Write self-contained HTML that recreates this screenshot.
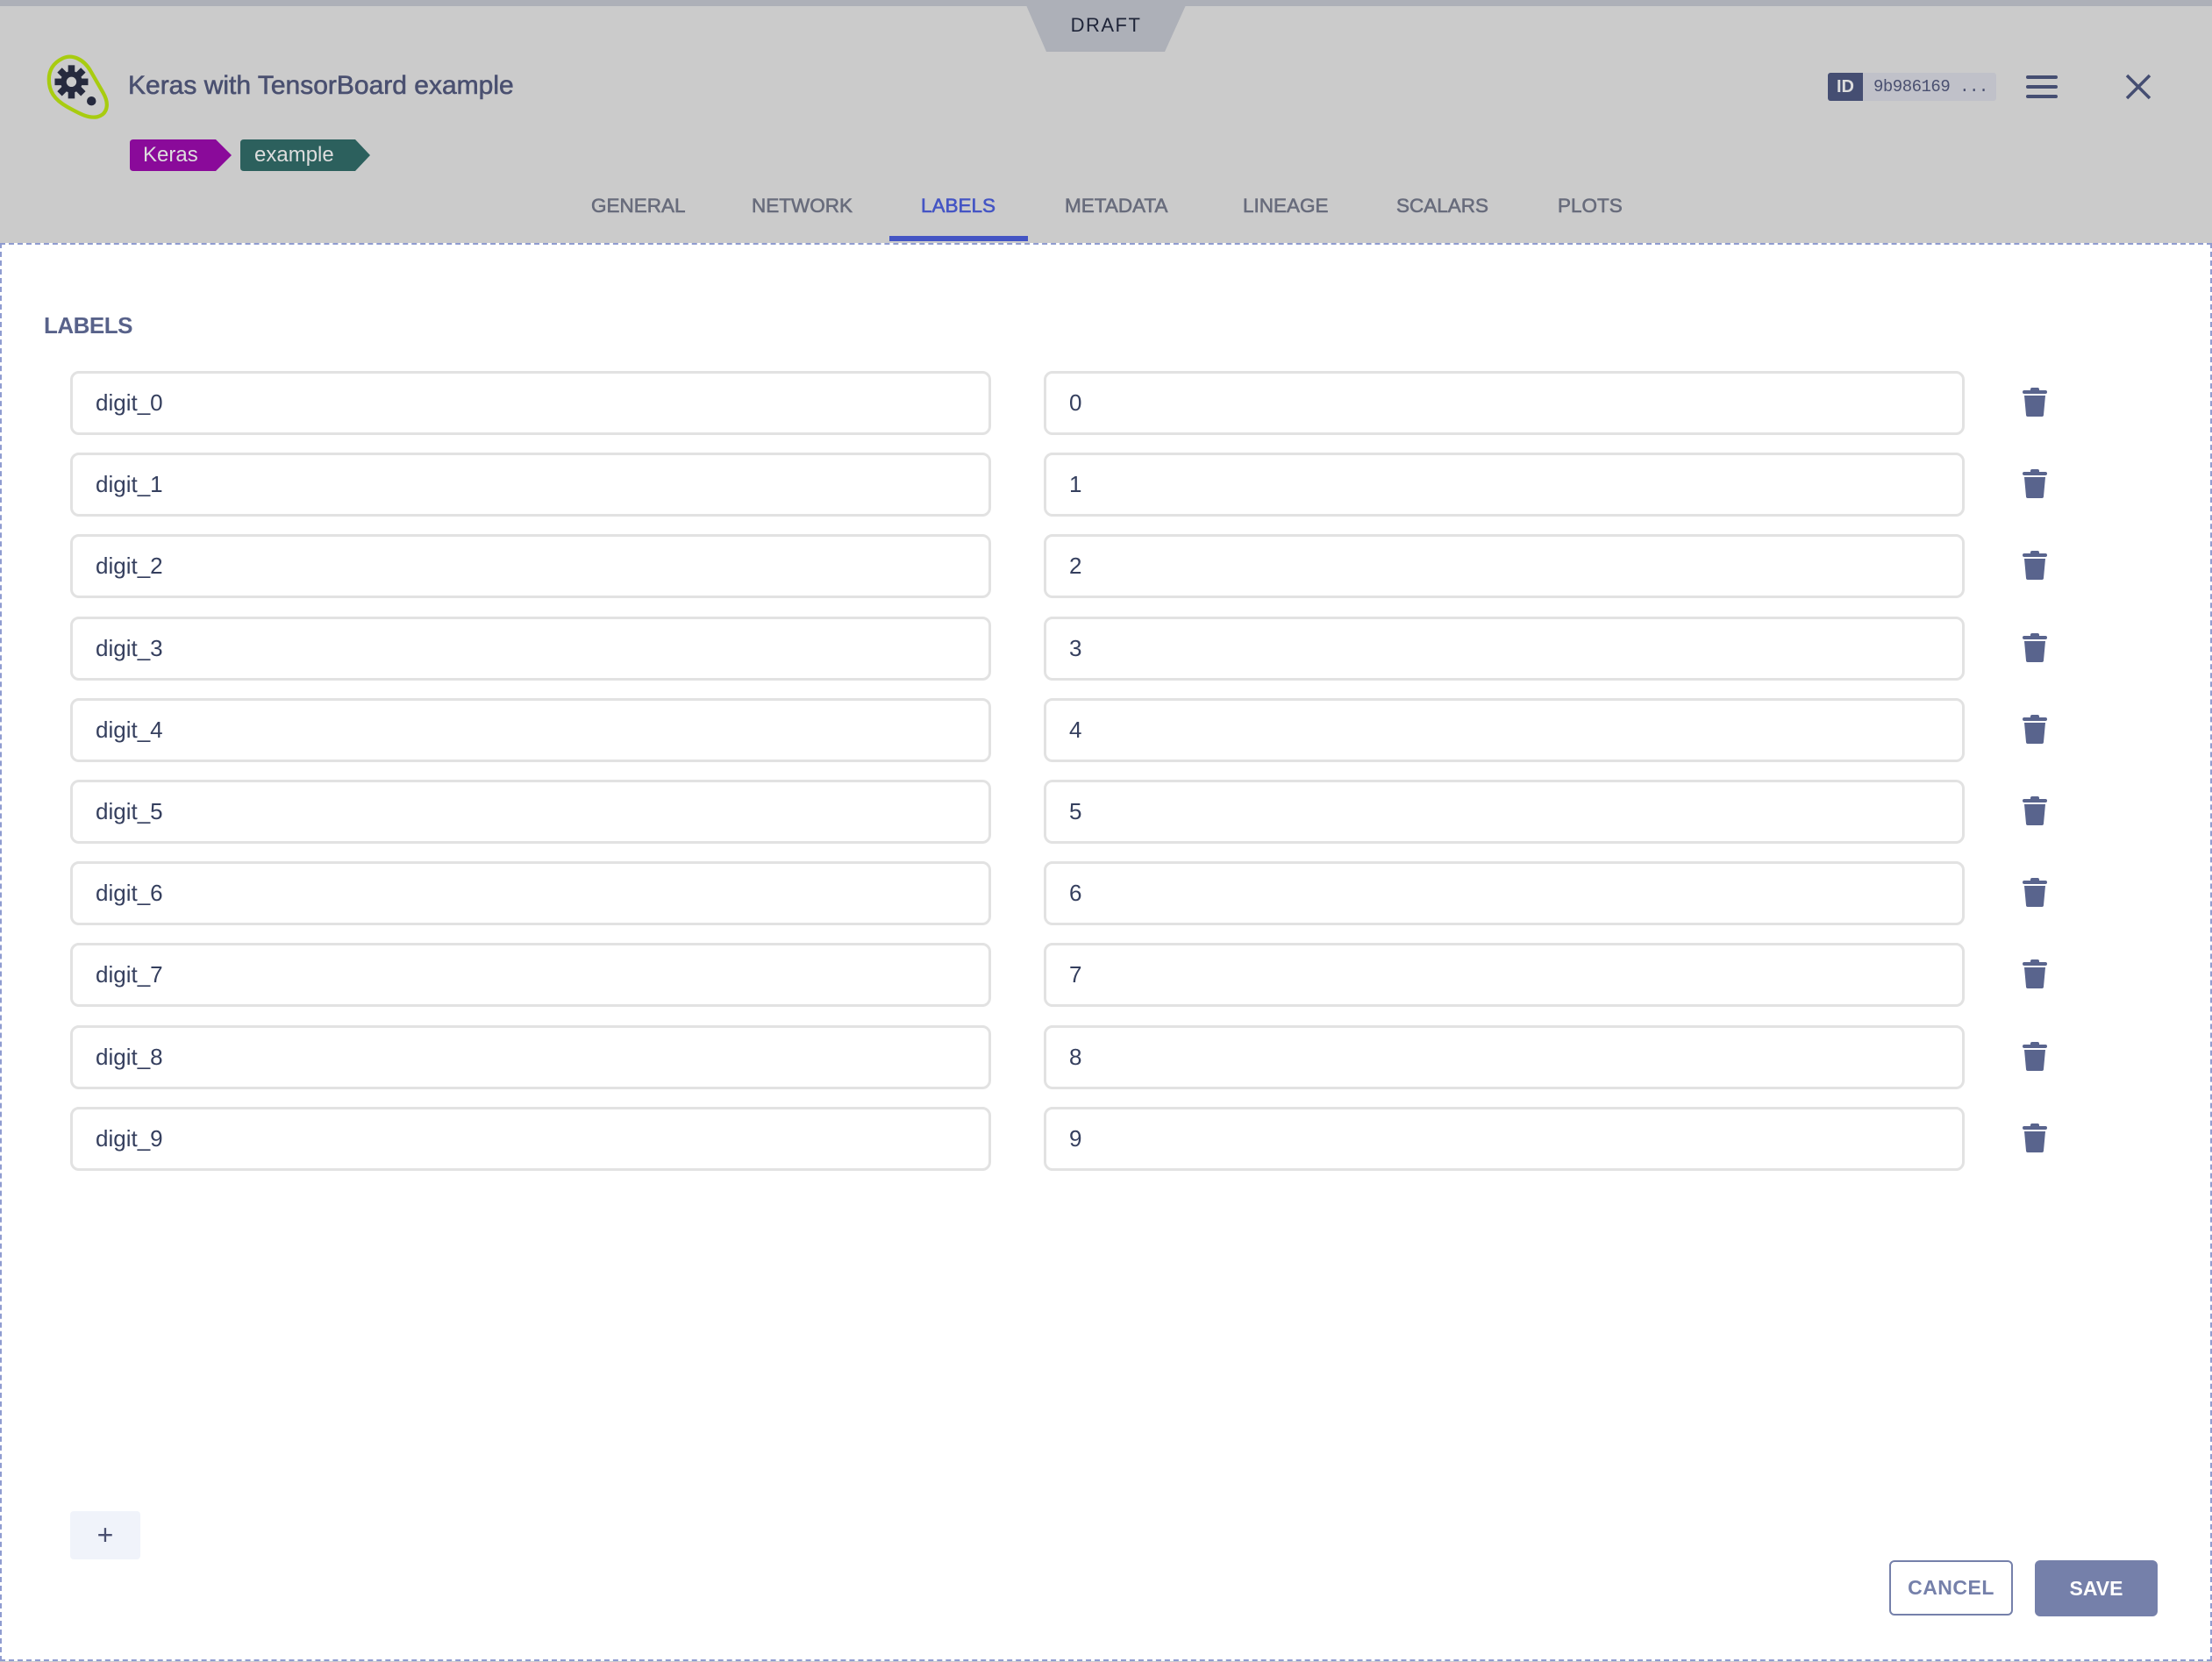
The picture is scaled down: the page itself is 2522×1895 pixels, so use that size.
<!DOCTYPE html>
<html><head><meta charset="utf-8"><style>
*{box-sizing:border-box;margin:0;padding:0}
body{width:2522px;height:1895px;background:#cbcbcb;font-family:"Liberation Sans",sans-serif;position:relative;overflow:hidden}
.abs{position:absolute}
.top{left:0;top:0;width:2522px;height:7px;background:#adb0b8}
.hdr{left:0;top:0;width:2522px;height:277px;background:#cbcbcb;box-shadow:0 3px 6px rgba(0,0,0,.18)}
.title{left:146px;top:80px;font-size:30px;color:#4a5070;line-height:36px;-webkit-text-stroke:0.6px #4a5070}
.tab{top:222px;font-size:22.5px;color:#686c7c;line-height:26px;-webkit-text-stroke:0.6px #686c7c}
.content{left:0;top:277px;width:2522px;height:1617px;background:#fff;border:2px dashed #8f9cd0}
.inp{height:73px;border:3px solid #e2e2e2;border-radius:10px;background:#fff;font-size:26px;color:#353f5e;line-height:67px;padding-left:26px}
.trash{left:2306px;width:28px;height:36px}
</style></head><body>
<div class="abs hdr"></div>
<div class="abs top"></div>
<svg class="abs" style="left:1168px;top:6px" width="186" height="54"><polygon points="2,0 184,0 160,53 25,53" fill="#adb0b8"/></svg>
<div class="abs" style="left:1170px;top:16px;width:182px;text-align:center;font-size:22px;color:#1e2438;letter-spacing:1.5px;line-height:26px">DRAFT</div>
<svg class="abs" style="left:52px;top:62px" width="76" height="76" viewBox="0 0 80 80">
<path d="M20 5 C32 -1 46 6 54 20 L69 46 C77 60 74 72 62 75 C52 77 42 72 26 63 C10 54 4 44 4 30 C4 18 10 10 20 5 Z" fill="none" stroke="#a8cc10" stroke-width="4.5"/>
<g transform="translate(31,33)" fill="#262a3e">
<circle r="13"/>
<g id="t"><rect x="-4" y="-20" width="8" height="9"/></g>
<use href="#t" transform="rotate(45)"/><use href="#t" transform="rotate(90)"/><use href="#t" transform="rotate(135)"/><use href="#t" transform="rotate(180)"/><use href="#t" transform="rotate(225)"/><use href="#t" transform="rotate(270)"/><use href="#t" transform="rotate(315)"/>
<circle r="6" fill="#cbcbcb"/>
</g>
<circle cx="55" cy="56" r="5.5" fill="#262a3e"/>
</svg>
<div class="abs title">Keras with TensorBoard example</div>
<svg class="abs" style="left:148px;top:159px" width="280" height="37">
<path d="M4 0 H98 L116 18 L98 36 H4 Q0 36 0 32 V4 Q0 0 4 0Z" fill="#8a0a9a"/>
<path d="M130 0 H257 L274 18 L257 36 H130 Q126 36 126 32 V4 Q126 0 130 0Z" fill="#2c605d"/>
</svg>
<div class="abs" style="left:163px;top:163px;font-size:24px;color:#ddd;line-height:28px">Keras</div>
<div class="abs" style="left:290px;top:163px;font-size:24px;color:#ddd;line-height:28px">example</div>
<div class="abs tab" style="left:674px">GENERAL</div>
<div class="abs tab" style="left:857px">NETWORK</div>
<div class="abs tab" style="left:1050px;color:#4455c4;-webkit-text-stroke:0.6px #4455c4">LABELS</div>
<div class="abs" style="left:1014px;top:269px;width:158px;height:6px;background:#4455c4"></div>
<div class="abs tab" style="left:1214px">METADATA</div>
<div class="abs tab" style="left:1417px">LINEAGE</div>
<div class="abs tab" style="left:1592px">SCALARS</div>
<div class="abs tab" style="left:1776px">PLOTS</div>
<div class="abs" style="left:2084px;top:83px;width:192px;height:32px;background:#c0c1c9;border-radius:3px"></div>
<div class="abs" style="left:2084px;top:83px;width:40px;height:32px;background:#454e72;border-radius:3px 0 0 3px;color:#ddd;font-weight:bold;font-size:20px;text-align:center;line-height:32px">ID</div>
<div class="abs" style="left:2136px;top:83px;font-family:'Liberation Mono',monospace;font-size:19px;color:#4a5070;line-height:32px;letter-spacing:-0.5px">9b986169 ...</div>
<div class="abs" style="left:2310px;top:86px;width:36px;height:4px;background:#454e72;border-radius:2px"></div>
<div class="abs" style="left:2310px;top:97px;width:36px;height:4px;background:#454e72;border-radius:2px"></div>
<div class="abs" style="left:2310px;top:108px;width:36px;height:4px;background:#454e72;border-radius:2px"></div>
<svg class="abs" style="left:2422px;top:84px" width="32" height="30"><path d="M3 2 L29 28 M29 2 L3 28" stroke="#454e72" stroke-width="3.5"/></svg>
<div class="abs content"></div>
<div class="abs" style="left:50px;top:356px;font-size:26px;font-weight:bold;color:#58628a;line-height:30px;letter-spacing:-0.5px">LABELS</div>
<div id="rows"></div>
<div class="abs" style="left:80px;top:1723px;width:80px;height:55px;background:#f0f3fa;border-radius:4px;text-align:center;line-height:55px;font-size:32px;color:#4a5070">+</div>
<div class="abs" style="left:2154px;top:1779px;width:141px;height:63px;border:2px solid #7580aa;border-radius:6px;color:#7580aa;font-weight:bold;font-size:23px;text-align:center;line-height:59px;letter-spacing:.5px">CANCEL</div>
<div class="abs" style="left:2320px;top:1779px;width:140px;height:64px;background:#7580aa;border-radius:6px;color:#fff;font-weight:bold;font-size:23px;text-align:center;line-height:64px">SAVE</div>
<script>
var h='';
for(var i=0;i<10;i++){var y=Math.round(423+i*93.2);
h+='<div class="abs inp" style="left:80px;top:'+y+'px;width:1050px">digit_'+i+'</div>';
h+='<div class="abs inp" style="left:1190px;top:'+y+'px;width:1050px">'+i+'</div>';
h+='<svg class="abs trash" style="top:'+(y+17)+'px" viewBox="0 0 28 36"><rect x="0" y="5" width="28" height="4" rx="2" fill="#59648d"/><rect x="9" y="2" width="10" height="5" rx="2" fill="#59648d"/><path d="M2 11 H26 L24 33 Q24 35 22 35 H6 Q4 35 4 33 Z" fill="#59648d"/></svg>';}
document.getElementById('rows').innerHTML=h;
</script>
</body></html>
